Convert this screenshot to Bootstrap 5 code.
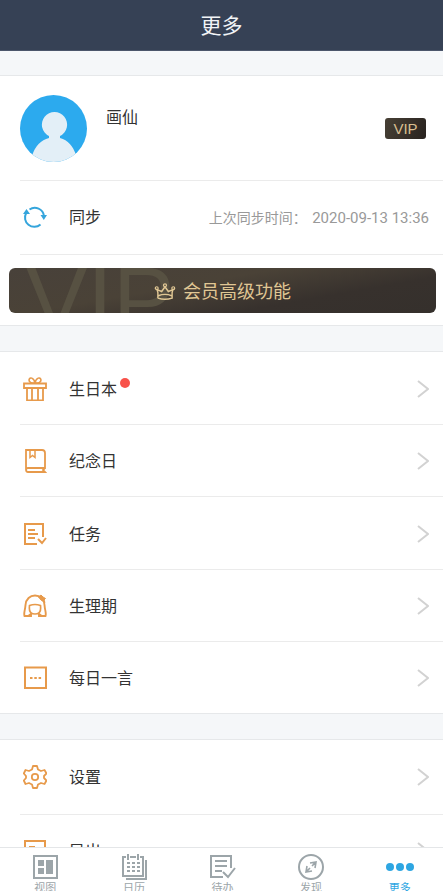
<!DOCTYPE html>
<html lang="zh-CN">
<head>
<meta charset="utf-8">
<meta name="viewport" content="width=device-width, initial-scale=1">
<title>更多</title>
<link href="https://cdn.jsdelivr.net/npm/bootstrap@5.3.0/dist/css/bootstrap.min.css" rel="stylesheet">
<style>
body { font-family: Roboto, "Noto Sans CJK SC", sans-serif; font-size: 16px; line-height: 24px; color: #333; background: #f5f7f9; }
.app-header { background: #364155; height: 51px; border-bottom: 1px solid #4b566b; }
.app-header h1 { font-size: 21px; line-height: 30px; font-weight: 400; color: #f2f4f7; padding-top: 2px; }
.app-main { gap: 25px; padding-top: 24px; min-height: 0; }
.panel { background: #fff; border-top: 1px solid #e6e8ea; border-bottom: 1px solid #e6e8ea; }
.entry { position: relative; min-height: 74px; padding: 0 14px 0 23px; color: #333; text-decoration: none; background: #fff; border: 0; width: 100%; text-align: left; }
.entry + .entry::before, .ruled::before { content: ""; position: absolute; top: 0; left: 20px; right: 0; border-top: 1px solid #ebebeb; }
.entry-list { min-height: 363px; }
.entry-list .entry { flex: 1 1 0; min-height: 72px; padding-top: 2px; }
.entry svg { flex: none; }
.entry-label { padding-top: 2px; }
.entry-icon { width: 24px; height: 24px; margin-right: 22px; fill: none; stroke: #e79a4b; stroke-width: 2; }
.sync-icon { stroke: #35a5dc; }
.chevron { width: 12px; height: 18px; fill: none; stroke: #d2d2d2; stroke-width: 2; }
.profile { min-height: 104px; padding: 0 17px 0 20px; }
.avatar { width: 67px; height: 67px; margin-right: 19px; }
.user-name { margin-bottom: 20px; }
.vip-tag { width: 41px; height: 21px; border-radius: 3px; background: linear-gradient(110deg, #474035, #29231f); color: #d8bf91; font-family: "Liberation Sans", sans-serif; font-size: 15px; line-height: 21px; text-align: center; }
.sync-time { font-size: 14px; color: #999; padding-top: 2px; }
.sync-time time { font-size: 15px; margin-left: 2px; }
.vip-wrap { position: relative; padding: 14px 7px 12px 9px; }
.vip-button { position: relative; height: 45px; border: 0; border-radius: 6px; overflow: hidden; background: linear-gradient(170deg, #48413a 0%, #4a4237 40%, #37312d 70%, #35302c 100%); color: #e0c794; font-size: 18px; line-height: 27px; gap: 7px; }
.vip-button svg { width: 22px; height: 20px; fill: none; stroke: #e0c794; stroke-width: 2; }
.watermark { position: absolute; left: 17px; top: -1px; font-size: 92px; line-height: 66px; font-family: "Liberation Sans", sans-serif; color: #575142; }
.vip-label { position: relative; padding-top: 1px; }
.dot { width: 10px; height: 10px; border-radius: 50%; background: #f8524a; margin: 0 0 12px 3px; }
.tab-bar { height: 44px; border-top: 1px solid #e4e6e8; background: #fff; overflow: hidden; }
.tab-bar a { flex: 1 1 0; padding-top: 5px; color: #9ca5a9; text-decoration: none; font-size: 11px; line-height: 16px; }
.tab-bar svg { flex: none; width: 28px; height: 28px; margin-left: 2px; fill: none; stroke: currentColor; stroke-width: 2; }
.tab-bar span { margin-left: 2px; }
.tab-bar a.active { color: #2ea6e2; }
</style>
<script src="https://cdn.jsdelivr.net/npm/bootstrap@5.3.0/dist/js/bootstrap.bundle.min.js"></script>
</head>
<body>
<div class="vh-100 d-flex flex-column overflow-hidden">
  <header class="app-header d-flex align-items-center justify-content-center flex-shrink-0">
    <h1 class="m-0">更多</h1>
  </header>

  <main class="app-main d-flex flex-column flex-grow-1 overflow-hidden">
    <section class="panel flex-shrink-0">
      <div class="profile d-flex align-items-center">
        <svg class="avatar" viewBox="0 0 67 67" aria-hidden="true">
          <defs><clipPath id="face"><circle cx="33.500" cy="33.500" r="33.500"/></clipPath></defs>
          <g clip-path="url(#face)">
            <rect width="67" height="67" fill="#2caaee"/>
            <path d="M12 61C15 51 21 45 29 43V41A12.600 12.600 0 1 1 40 41V43C48 45 53 51 56 60V67H12Z" fill="#e3eff7"/>
          </g>
        </svg>
        <span class="user-name">画仙</span>
        <span class="vip-tag ms-auto">VIP</span>
      </div>
      <button type="button" class="entry ruled d-flex align-items-center">
        <svg class="entry-icon sync-icon" viewBox="0 0 24 24" aria-hidden="true">
          <path d="M6.500 4.500A9.300 9.300 0 0 1 21 11M17.500 19.500A9.300 9.300 0 0 1 3.200 8"/>
          <path d="M17.500 10H24L20.800 15ZM0 9L3.500 4L7 9Z" fill="#35a5dc" stroke="none"/>
        </svg>
        <span class="entry-label">同步</span>
        <span class="sync-time ms-auto">上次同步时间： <time datetime="2020-09-13T13:36">2020-09-13 13:36</time></span>
      </button>
      <div class="vip-wrap ruled">
        <button type="button" class="vip-button w-100 d-flex align-items-center justify-content-center">
          <span class="watermark" aria-hidden="true">VIP</span>
          <svg class="vip-label" viewBox="0 0 22 20" aria-hidden="true">
            <path d="M3.500 17V11L2.700 8L7.500 10L11 5L14.500 10L19.300 8L18.500 11V17Q11 19.500 3.500 17M4 14.500Q11 11.500 18 14.500" stroke-width="1.500"/>
            <circle cx="11" cy="3.500" r="1.600" stroke-width="1.300"/><circle cx="2.300" cy="6.500" r="1.500" stroke-width="1.300"/><circle cx="19.700" cy="6.500" r="1.500" stroke-width="1.300"/>
          </svg>
          <span class="vip-label">会员高级功能</span>
        </button>
      </div>
    </section>

    <nav class="panel entry-list d-flex flex-column flex-shrink-0" aria-label="功能">
      <a href="#" class="entry d-flex align-items-center">
        <svg class="entry-icon" viewBox="0 0 24 24" aria-hidden="true"><path d="M1 6.500H23V11H1ZM4 11V23.500H20V11M9 11V23M15 11V23" stroke-width="1.800"/><path d="M12 6C9 6.500 6 5.500 6 3C6.500 -.5 11 .5 12 6C13 .5 17.500 -.5 18 3C18 5.500 15 6.500 12 6Z" stroke-width="1.600"/></svg>
        <span class="entry-label">生日本</span><span class="dot"></span>
        <svg class="chevron ms-auto" viewBox="0 0 12 18" aria-hidden="true"><path d="M1 1L11 9L1 17"/></svg>
      </a>
      <a href="#" class="entry d-flex align-items-center">
        <svg class="entry-icon" viewBox="0 0 24 24" aria-hidden="true"><path d="M5 19Q3 19 3 21V1H19Q22 1 22 4V19H5M3 20.500Q3 23 5 23H22L20 21L22 19" stroke-width="1.800"/><path d="M7 1V8.500L9.500 6.500L12 8.500V1" stroke-width="1.500"/></svg>
        <span class="entry-label">纪念日</span>
        <svg class="chevron ms-auto" viewBox="0 0 12 18" aria-hidden="true"><path d="M1 1L11 9L1 17"/></svg>
      </a>
      <a href="#" class="entry d-flex align-items-center">
        <svg class="entry-icon" viewBox="0 0 24 24" aria-hidden="true"><path d="M20 15V2H2V22H14M5 8H12M5 12H15M5 16H12M15 17L19 21L23 16"/></svg>
        <span class="entry-label">任务</span>
        <svg class="chevron ms-auto" viewBox="0 0 12 18" aria-hidden="true"><path d="M1 1L11 9L1 17"/></svg>
      </a>
      <a href="#" class="entry d-flex align-items-center">
        <svg class="entry-icon" viewBox="0 0 24 24" aria-hidden="true"><path d="M8 19.500V22H1.500C.5 19 2 17 2.500 11C3 5 7 1.500 12 1.500S21 5 21.500 11C22 17 23.500 19 22.500 22H16V19.500" stroke-width="1.900"/><path d="M6.500 11.500Q12 9.500 17.500 11.500C18.500 20 14 20 12 20S5.500 20 6.500 11.500ZM5 22Q7 20 9 19.500M19 22Q17 20 15 19.500" stroke-width="1.700"/><path d="M15.500 3L18 1L20 3L22.500 4.500L21 6L22 8.500L18 6Z" fill="#e79a4b" stroke-width="1"/></svg>
        <span class="entry-label">生理期</span>
        <svg class="chevron ms-auto" viewBox="0 0 12 18" aria-hidden="true"><path d="M1 1L11 9L1 17"/></svg>
      </a>
      <a href="#" class="entry d-flex align-items-center">
        <svg class="entry-icon" viewBox="0 0 24 24" aria-hidden="true"><path d="M2 1.500H23V22H2ZM7 12H9.500M11.300 12H13.800M15.600 12H18.100"/></svg>
        <span class="entry-label">每日一言</span>
        <svg class="chevron ms-auto" viewBox="0 0 12 18" aria-hidden="true"><path d="M1 1L11 9L1 17"/></svg>
      </a>
    </nav>

    <nav class="panel flex-shrink-0" aria-label="系统">
      <a href="#" class="entry d-flex align-items-center">
        <svg class="entry-icon" viewBox="0 0 24 24" aria-hidden="true"><path d="M10 1H14L15 4.500L18 6L21.500 5L23.500 8.500L21 11V13L23.500 15.500L21.500 19L18 18L15 19.500L14 23H10L9 19.500L6 18L2.500 19L.8 15.500L3 13V11L.8 8.500L2.500 5L6 6L9 4.500Z" stroke-width="1.800" stroke-linejoin="round"/><circle cx="12" cy="12" r="3.200" stroke-width="1.800"/></svg>
        <span class="entry-label">设置</span>
        <svg class="chevron ms-auto" viewBox="0 0 12 18" aria-hidden="true"><path d="M1 1L11 9L1 17"/></svg>
      </a>
      <a href="#" class="entry d-flex align-items-center">
        <svg class="entry-icon" viewBox="0 0 24 24" aria-hidden="true"><path d="M14 22H2V2H22V14M6 8H12M6 12H16M15 18H23"/></svg>
        <span class="entry-label">导出</span>
        <svg class="chevron ms-auto" viewBox="0 0 12 18" aria-hidden="true"><path d="M1 1L11 9L1 17"/></svg>
      </a>
    </nav>
  </main>

  <nav class="tab-bar d-flex flex-shrink-0" aria-label="主导航">
    <a href="#" class="d-flex flex-column align-items-center">
      <svg viewBox="0 0 28 28" aria-hidden="true"><path d="M3 3H26V25H3Z"/><path d="M7 7H13V13H7ZM7 15H13V21H7ZM15 7H22V21H15Z" fill="currentColor" stroke="none"/></svg>
      <span>视图</span>
    </a>
    <a href="#" class="d-flex flex-column align-items-center">
      <svg viewBox="0 0 28 28" aria-hidden="true"><path d="M6 4H3V23H23V4H20M10 4H16M8 1V7M18 1V7M26 7V26H6"/><path d="M7 10H20M7 14H20M7 18H20" stroke-dasharray="3 2"/></svg>
      <span>日历</span>
    </a>
    <a href="#" class="d-flex flex-column align-items-center">
      <svg viewBox="0 0 28 28" aria-hidden="true"><path d="M23 15V3H3V24H15M7 8H19M7 13H19M7 18H14M15 19L20 24L27 15"/></svg>
      <span>待办</span>
    </a>
    <a href="#" class="d-flex flex-column align-items-center">
      <svg viewBox="0 0 28 28" aria-hidden="true"><circle cx="14" cy="14" r="12"/><path d="M13 10L19 9L18 15M15 18L9 19L10 13M18 10L15 13M10 18L13 15" stroke-width="1.600"/></svg>
      <span>发现</span>
    </a>
    <a href="#" class="active d-flex flex-column align-items-center" aria-current="page">
      <svg viewBox="0 0 28 28" aria-hidden="true"><g fill="currentColor" stroke="none"><circle cx="4" cy="14" r="4"/><circle cx="14" cy="14" r="4"/><circle cx="24" cy="14" r="4"/></g></svg>
      <span>更多</span>
    </a>
  </nav>
</div>
</body>
</html>
